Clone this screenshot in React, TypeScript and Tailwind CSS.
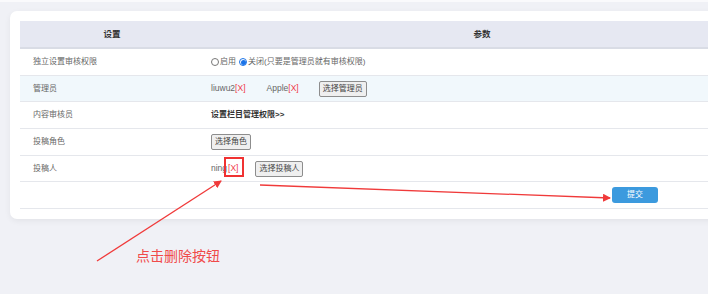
import React from "react";

const font = { fontFamily: '"Liberation Sans", "Noto Sans CJK SC", sans-serif' };

function Btn({ children }: { children: React.ReactNode }) {
  return (
    <span className="inline-flex h-[16px] items-center rounded-[2px] border border-[#8d8d8d] bg-[#efefef] px-[3px] text-[8px] leading-none text-[#444]">
      {children}
    </span>
  );
}

function X() {
  return <span className="text-[#f0394a]">[X]</span>;
}

function Row({ label, children, bg = "bg-white", h = "h-[27px]" }: { label: string; children?: React.ReactNode; bg?: string; h?: string }) {
  return (
    <div className={`flex ${h} items-center border-b border-[#e5e7ec] ${bg}`}>
      <div className="w-[184px] shrink-0 pl-[13px] text-[8px] text-[#666]">{label}</div>
      <div className="flex flex-1 items-center pl-[7px] text-[8.5px] text-[#666]">{children}</div>
    </div>
  );
}

export default function App() {
  return (
    <div className="relative h-[294px] w-[708px] overflow-hidden bg-[#f0f1f6]" style={font}>
      <div className="h-[2px] w-full bg-[#fafafc]" />
      <div className="pl-[10px] pt-[9px]">
        <div className="w-[760px] rounded-[7px] bg-white px-[10px] pb-[10px] pt-[10px] shadow-[0_2px_6px_rgba(0,0,0,0.06)]">
          <div className="w-[740px]">
            <div className="flex h-[28px] items-center border-b-2 border-[#d9dce5] bg-[#e6e8f2] text-[8.5px] font-bold text-[#333]">
              <div className="w-[184px] shrink-0 text-center">设置</div>
              <div className="flex-1 text-center">参数</div>
            </div>
            <Row label="独立设置审核权限">
              <span className="mr-[1px] inline-block h-[8px] w-[8px] rounded-full border border-[#777] bg-white" />
              <span className="text-[8px]">启用</span>
              <span className="ml-[3px] mr-[1px] inline-flex h-[8px] w-[8px] items-center justify-center rounded-full border border-[#1a73e8] bg-white">
                <span className="h-[5px] w-[5px] rounded-full bg-[#1a73e8]" />
              </span>
              <span className="text-[8px]">关闭(只要是管理员就有审核权限)</span>
            </Row>
            <Row label="管理员" bg="bg-[#f1f8fc]" h="h-[26px]">
              <span>
                liuwu2<X />
              </span>
              <span className="ml-[21px]">
                Apple<X />
              </span>
              <span className="ml-[20px]">
                <Btn>选择管理员</Btn>
              </span>
            </Row>
            <Row label="内容审核员">
              <span className="text-[8px] font-bold text-[#333]">设置栏目管理权限&gt;&gt;</span>
            </Row>
            <Row label="投稿角色">
              <Btn>选择角色</Btn>
            </Row>
            <Row label="投稿人" h="h-[26px]">
              <span>ning</span>
              <span className="relative ml-[1px]">
                <X />
                <span className="absolute -left-[4px] -top-[5px] h-[20px] w-[20px] border-2 border-[#f03232]" />
              </span>
              <span className="ml-[17px]">
                <Btn>选择投稿人</Btn>
              </span>
            </Row>
            <div className="flex h-[27px] items-center border-b border-[#e5e7ec]">
              <div className="w-[592px] shrink-0" />
              <span className="inline-flex h-[16px] w-[46px] items-center justify-center rounded-[3px] bg-[#3c9ade] text-[8px] text-white">
                提交
              </span>
            </div>
          </div>
        </div>
      </div>

      <svg className="pointer-events-none absolute left-0 top-0" width="708" height="294">
        <defs>
          <marker id="ah" markerWidth="8" markerHeight="8" refX="7" refY="4" orient="auto" markerUnits="userSpaceOnUse">
            <path d="M0,0 L8,4 L0,8 z" fill="#f03a3a" />
          </marker>
        </defs>
        <line x1="97" y1="261" x2="221" y2="181" stroke="#f03a3a" strokeWidth="1.3" markerEnd="url(#ah)" />
        <line x1="260" y1="185" x2="610" y2="198" stroke="#f03a3a" strokeWidth="1.3" markerEnd="url(#ah)" />
      </svg>
      <div className="absolute left-[136px] top-[248px] text-[14px] leading-none text-[#f04a4a]" style={{ fontFamily: '"Noto Sans CJK SC", sans-serif' }}>
        点击删除按钮
      </div>
    </div>
  );
}
